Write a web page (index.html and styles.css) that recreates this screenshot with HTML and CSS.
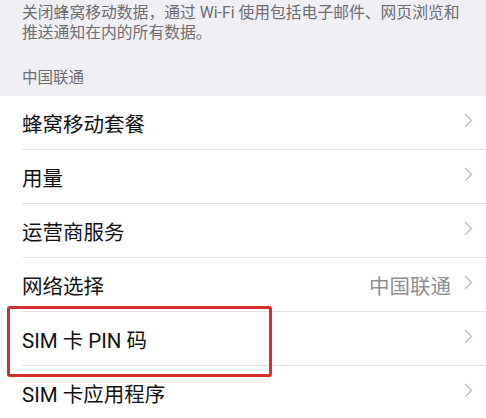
FILE: index.html
```html
<!DOCTYPE html>
<html>

<head>
    <title>蜂窝移动网络</title>
    <meta charset="utf-8">
    <link rel="stylesheet" href="styles.css">
</head>

<body>
    <div class="note">
        <p>关闭蜂窝移动数据，通过 Wi-Fi 使用包括电子邮件、网页浏览和推送通知在内的所有数据。</p>
    </div>
    <div class="group-title">中国联通</div>

    <ul class="list">
        <li class="row">
            <div class="row-in"><span class="label">蜂窝移动套餐</span><span class="chev"></span></div>
        </li>
        <li class="row">
            <div class="row-in"><span class="label">用量</span><span class="chev"></span></div>
        </li>
        <li class="row">
            <div class="row-in"><span class="label">运营商服务</span><span class="chev"></span></div>
        </li>
        <li class="row">
            <div class="row-in"><span class="label">网络选择</span><span class="value">中国联通</span><span class="chev"></span></div>
        </li>
        <li class="row marked">
            <div class="row-in"><span class="label">SIM 卡 PIN 码</span><span class="chev"></span></div>
            <div class="mark"></div>
        </li>
        <li class="row">
            <div class="row-in"><span class="label">SIM 卡应用程序</span><span class="chev"></span></div>
        </li>
    </ul>

    <script>
        // same chevron for every row
        var chevs = document.querySelectorAll(".chev");
        for (var i = 0; i < chevs.length; i++) {
            chevs[i].innerHTML = '<svg width="9" height="15" viewBox="0 0 9 15"><polyline points="1,1 7.5,7.5 1,14" fill="none" stroke="#c4c4c9" stroke-width="1.6"/></svg>';
        }
    </script>
</body>

</html>
```

FILE: styles.css
```css
body {
    margin: 0;
    background-color: #efeff4;
    font-family: Roboto, "Noto Sans CJK SC", sans-serif;
    color: #111;
}

.note {
    padding: 3px 19px 0 22px;
}

.note p {
    margin: 0;
    font-size: 15.8px;
    line-height: 20px;
    color: #6d6d72;
}

.group-title {
    padding: 25px 22px 8px;
    font-size: 15.5px;
    line-height: 20px;
    color: #6d6d72;
}

.list {
    list-style: none;
    margin: 0;
    padding: 0;
    background-color: white;
}

.row {
    padding-left: 22px;
    position: relative;
}

.row-in {
    height: 53px;
    display: flex;
    align-items: center;
    padding-right: 13px;
    border-bottom: 1px solid #e0e0e3;
}

.label {
    flex: 1;
    font-size: 20.5px;
}

.value {
    font-size: 20.5px;
    color: #8e8e93;
    margin-right: 13px;
}

.chev {
    display: flex;
    margin-top: -4px;
}

.mark {
    position: absolute;
    left: 7px;
    top: -6px;
    width: 259px;
    height: 65px;
    border: 3px solid #d5302c;
    border-radius: 3px;
}
```
